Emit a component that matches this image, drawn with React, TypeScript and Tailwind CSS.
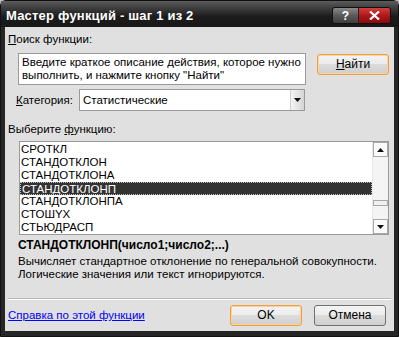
import React from "react";

const font = { fontFamily: "'Liberation Sans', Arial, sans-serif" };

function Btn({ children, def }: { children: React.ReactNode; def?: boolean }) {
  return (
    <div
      className={
        "flex h-[21px] w-[72px] items-center justify-center rounded-[3px] border text-[12px] text-black " +
        (def
          ? "border-[#f0a040] shadow-[inset_0_0_0_1px_#fbd39a]"
          : "border-[#707070]")
      }
      style={{ background: "linear-gradient(#f4f4f4 0%, #ececec 45%, #dcdcdc 50%, #cfcfcf 100%)" }}
    >
      {children}
    </div>
  );
}

const rows = ["СРОТКЛ", "СТАНДОТКЛОН", "СТАНДОТКЛОНА", "СТАНДОТКЛОНП", "СТАНДОТКЛОНПА", "СТОШYX", "СТЬЮДРАСП"];

export default function App() {
  return (
    <div className="h-[337px] w-[399px] overflow-hidden bg-[#bdbdbd]" style={font}>
      <div className="flex h-[337px] w-[399px] flex-col rounded-t-[6px] border border-[#111] bg-[#262626]">
        <div
          className="flex h-[26px] shrink-0 items-center justify-between pl-[5px] pr-[7px] pt-[3px]"
          style={{ background: "linear-gradient(#5c5c5c 0%, #3a3a3a 30%, #1c1c1c 60%, #181818 100%)" }}
        >
          <span className="whitespace-nowrap text-[13px] font-bold tracking-[0.2px] text-white">Мастер функций - шаг 1 из 2</span>
          <div className="flex h-[17px] rounded-[3px] border border-[#111] bg-[#111]">
            <div
              className="flex h-[15px] w-[26px] items-center justify-center rounded-l-[2px] border-r border-[#222] text-[12px] font-bold text-white"
              style={{ background: "linear-gradient(#8a8a8a, #5a5a5a 50%, #3e3e3e)" }}
            >
              ?
            </div>
            <div
              className="flex h-[15px] w-[31px] items-center justify-center rounded-r-[2px]"
              style={{ background: "linear-gradient(#d04040, #b01818 50%, #8a0c0c)" }}
            >
              <svg width="11" height="9" viewBox="0 0 11 9">
                <path d="M1 0.5 L10 8.5 M10 0.5 L1 8.5" stroke="white" strokeWidth="2.2" />
              </svg>
            </div>
          </div>
        </div>
        <div className="mx-[4px] flex h-[304px] shrink-0 flex-col bg-[#e0e0e0] text-[11.5px] leading-[13px] text-black">
          <div className="ml-[3px] mt-[6px] whitespace-nowrap">
            <span className="underline">П</span>оиск функции:
          </div>
          <div className="mt-[7px] flex">
            <div className="ml-[13px] h-[32px] w-[288px] border border-[#9a9a9a] bg-white px-[3px] pt-[2px] whitespace-nowrap">
              Введите краткое описание действия, которое нужно
              <br />
              выполнить, и нажмите кнопку "Найти"
            </div>
            <div className="ml-[11px] mt-[1px]">
              <Btn def>
                <span className="underline">Н</span>айти
              </Btn>
            </div>
          </div>
          <div className="mt-[4px] flex items-center">
            <div className="ml-[11px] w-[63px] whitespace-nowrap">
              <span className="underline">К</span>атегория:
            </div>
            <div className="flex h-[22px] w-[226px] border border-[#9a9a9a] bg-white">
              <div className="flex flex-1 items-center pl-[3px]">Статистические</div>
              <div
                className="flex w-[14px] items-center justify-center border-l border-[#cfcfcf]"
                style={{ background: "linear-gradient(90deg,#f4f4f4,#d4d4d4)" }}
              >
                <svg width="7" height="4" viewBox="0 0 7 4">
                  <path d="M0 0 H7 L3.5 4 Z" fill="#111" />
                </svg>
              </div>
            </div>
          </div>
          <div className="ml-[3px] mt-[12px] whitespace-nowrap">
            Выберите <span className="underline">ф</span>ункцию:
          </div>
          <div className="ml-[14px] mt-[5px] flex h-[94px] w-[370px] shrink-0 border border-[#9a9a9a] bg-white">
            <div className="flex flex-1 flex-col pt-[1px]">
              {rows.map((r, i) => (
                <div
                  key={r}
                  className={
                    "h-[13px] shrink-0 overflow-hidden whitespace-nowrap pl-[1px] leading-[13px] " +
                    (i === 3 ? "border border-dotted border-[#bbb] bg-[#333] pl-0 leading-[11px] text-white" : "")
                  }
                >
                  {r}
                </div>
              ))}
            </div>
            <div className="flex w-[16px] flex-col border-l border-[#e8e8e8] bg-[#f4f4f4]">
              <div className="flex h-[15px] items-center justify-center border border-[#a8a8a8] bg-[#fafafa]">
                <svg width="7" height="4" viewBox="0 0 7 4">
                  <path d="M0 4 H7 L3.5 0 Z" fill="#111" />
                </svg>
              </div>
              <div className="flex-1" />
              <div className="h-[6px] border border-[#a8a8a8] bg-[#f0f0f0]" />
              <div className="h-[13px]" />
              <div className="flex h-[15px] items-center justify-center border border-[#a8a8a8] bg-[#fafafa]">
                <svg width="7" height="4" viewBox="0 0 7 4">
                  <path d="M0 0 H7 L3.5 4 Z" fill="#111" />
                </svg>
              </div>
            </div>
          </div>
          <div className="ml-[13px] mt-[4px] whitespace-nowrap text-[12px] font-bold">СТАНДОТКЛОНП(число1;число2;...)</div>
          <div className="ml-[13px] mt-[3px] whitespace-nowrap">
            Вычисляет стандартное отклонение по генеральной совокупности.
            <br />
            Логические значения или текст игнорируются.
          </div>
          <div className="mx-[3px] mt-[17px] h-[2px] shrink-0 border-t border-b border-t-[#b8b8b8] border-b-white" />
          <div className="mt-[5px] flex items-start">
            <div className="ml-[3px] mt-[4px] w-[222px] whitespace-nowrap text-[#0000ff] underline">Справка по этой функции</div>
            <Btn def>OK</Btn>
            <div className="ml-[12px]">
              <Btn>Отмена</Btn>
            </div>
          </div>
        </div>
      </div>
    </div>
  );
}
